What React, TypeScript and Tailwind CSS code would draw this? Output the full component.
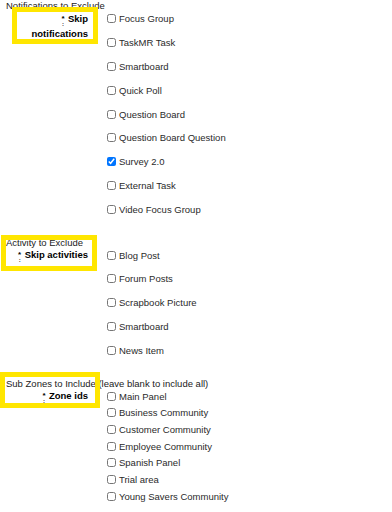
import React from "react";

type Item = { label: string; checked?: boolean };

const Marker = () => (
  <span className="inline-flex flex-col items-center w-[4px] mr-[3px] align-[1px] font-bold text-black">
    <span className="text-[8px] leading-[5px] h-[5px] overflow-visible">*</span>
    <span className="text-[6px] leading-[5px] h-[5px] mt-[1px]">:</span>
  </span>
);

function CheckRow({ item }: { item: Item }) {
  return (
    <label className="flex items-center h-[11px] leading-[11px] text-[#2a2a2a]">
      <input
        type="checkbox"
        defaultChecked={item.checked}
        className="m-0 w-[9px] h-[9px] mr-[3px] shrink-0 accent-[#0075ff]"
      />
      <span className="whitespace-nowrap">{item.label}</span>
    </label>
  );
}

function Section({
  title,
  label,
  items,
  gap,
  className,
}: {
  title: string;
  label: React.ReactNode;
  items: Item[];
  gap: string;
  className?: string;
}) {
  return (
    <div className={className}>
      <div className="h-[11px] leading-[11px] whitespace-nowrap text-[#222]">{title}</div>
      <div className="flex items-start mt-[2px]">
        <div className="w-[82px] shrink-0 text-right font-bold leading-[14px] mt-[-1.5px] text-black">
          {label}
        </div>
        <div className={`ml-[19px] flex flex-col ${gap}`}>
          {items.map((it, i) => (
            <CheckRow key={i} item={it} />
          ))}
        </div>
      </div>
    </div>
  );
}

export default function App() {
  return (
    <div className="relative w-[392px] h-[512px] bg-white overflow-hidden font-['Liberation_Sans',Arial,sans-serif] text-[9.5px] pl-[6px]">
      <Section
        title="Notifications to Exclude"
        gap="gap-[12.9px]"
        label={
          <>
            <Marker />
            Skip
            <br />
            notifications
          </>
        }
        items={[
          { label: "Focus Group" },
          { label: "TaskMR Task" },
          { label: "Smartboard" },
          { label: "Quick Poll" },
          { label: "Question Board" },
          { label: "Question Board Question" },
          { label: "Survey 2.0", checked: true },
          { label: "External Task" },
          { label: "Video Focus Group" },
        ]}
      />
      <Section
        className="mt-[21.5px]"
        title="Activity to Exclude"
        gap="gap-[12.8px]"
        label={
          <>
            <Marker />
            Skip activities
          </>
        }
        items={[
          { label: "Blog Post" },
          { label: "Forum Posts" },
          { label: "Scrapbook Picture" },
          { label: "Smartboard" },
          { label: "News Item" },
        ]}
      />
      <Section
        className="mt-[21.8px]"
        title="Sub Zones to Include (leave blank to include all)"
        gap="gap-[5.7px]"
        label={
          <>
            <Marker />
            Zone ids
          </>
        }
        items={[
          { label: "Main Panel" },
          { label: "Business Community" },
          { label: "Customer Community" },
          { label: "Employee Community" },
          { label: "Spanish Panel" },
          { label: "Trial area" },
          { label: "Young Savers Community" },
        ]}
      />

      <div className="absolute left-[12px] top-[7px] w-[86px] h-[37px] border-[5px] border-[#ffe600] pointer-events-none" />
      <div className="absolute left-[1px] top-[235px] w-[96px] h-[36px] border-[5px] border-[#ffe600] pointer-events-none" />
      <div className="absolute left-[0px] top-[372px] w-[100px] h-[36px] border-[5px] border-[#ffe600] pointer-events-none" />
    </div>
  );
}
